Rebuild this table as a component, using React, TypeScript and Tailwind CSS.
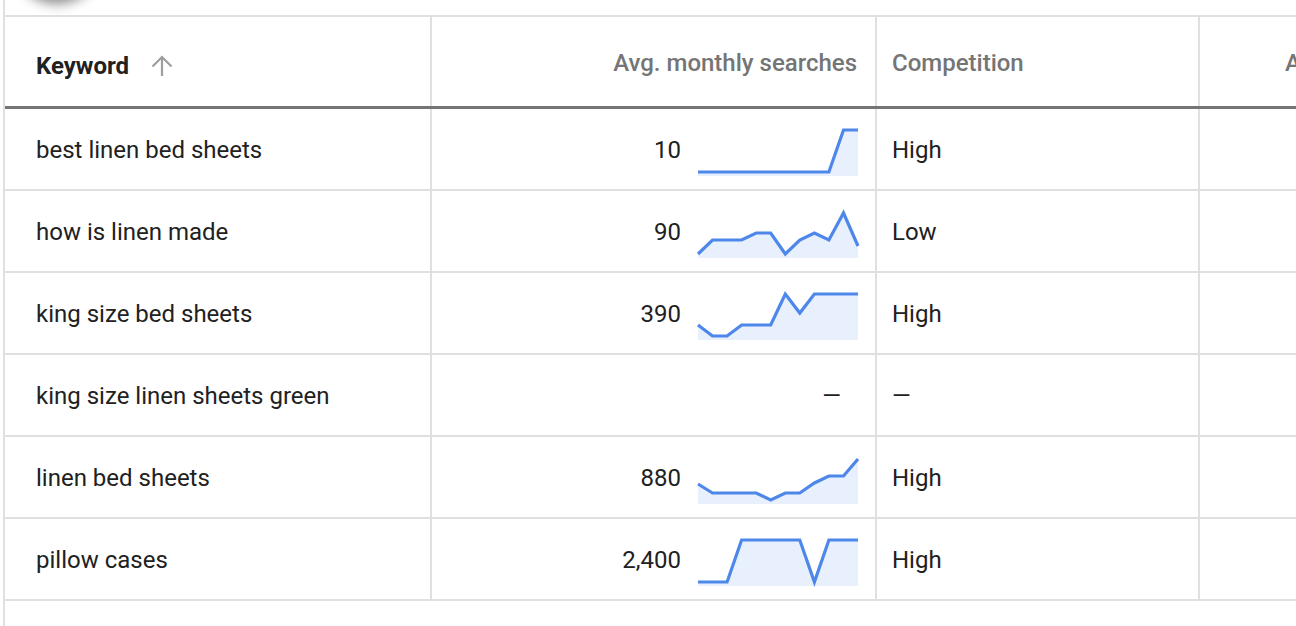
import React from "react";

interface Row {
  keyword: string;
  searches: string;
  trend: number[] | null;
  competition: string;
}

// y positions inside a 160x48 sparkline (2 = top, 44 = bottom)
const rows: Row[] = [
  {
    keyword: "best linen bed sheets",
    searches: "10",
    trend: [44, 44, 44, 44, 44, 44, 44, 44, 44, 44, 2, 2],
    competition: "High",
  },
  {
    keyword: "how is linen made",
    searches: "90",
    trend: [44, 30, 30, 30, 23, 23, 44, 30, 23, 30, 3, 36],
    competition: "Low",
  },
  {
    keyword: "king size bed sheets",
    searches: "390",
    trend: [33, 44, 44, 33, 33, 33, 2, 21, 2, 2, 2, 2],
    competition: "High",
  },
  {
    keyword: "king size linen sheets green",
    searches: "",
    trend: null,
    competition: "—",
  },
  {
    keyword: "linen bed sheets",
    searches: "880",
    trend: [28, 37, 37, 37, 37, 44, 37, 37, 27, 20, 20, 3],
    competition: "High",
  },
  {
    keyword: "pillow cases",
    searches: "2,400",
    trend: [44, 44, 44, 2, 2, 2, 2, 2, 44, 2, 2, 2],
    competition: "High",
  },
];

const Sparkline: React.FC<{ points: number[] }> = ({ points }) => {
  const step = 160 / (points.length - 1);
  const line = points.map((y, i) => `${(i * step).toFixed(1)},${y}`).join(" ");
  const area = `0,48 ${line} 160,48`;
  return (
    <svg width="160" height="48" viewBox="0 0 160 48" className="block overflow-visible">
      <polygon points={area} fill="#e8f0fe" />
      <polyline points={line} fill="none" stroke="#4e87ea" strokeWidth="3.2" />
    </svg>
  );
};

const ArrowUp = () => (
  <svg width="22" height="22" viewBox="0 0 22 22" className="block">
    <path d="M11 21V2.5M1.5 11.5L11 2l9.5 9.5" fill="none" stroke="#9e9e9e" strokeWidth="2.2" />
  </svg>
);

const grid = "grid grid-cols-[427px_445px_323px_1fr]";

export default function App() {
  return (
    <div
      className="relative h-[626px] w-[1296px] overflow-hidden bg-white text-[#212121]"
      style={{ fontFamily: "Roboto, 'Noto Sans', sans-serif" }}
    >
      <div className="absolute left-[12px] top-[-90px] h-[90px] w-[90px] rounded-full bg-white shadow-[0_4px_12px_rgba(0,0,0,0.45)]" />
      <div className="ml-[3px] h-full border-l-2 border-[#e0e0e0] pt-[15px]">
        <div className="border-t-2 border-[#e0e0e0]">
          {/* header */}
          <div className={`${grid} h-[92px] border-b-[3px] border-[#757575]`}>
            <div className="flex items-center gap-[22px] border-r-2 border-[#e0e0e0] pl-[31px] pt-[8px]">
              <span className="text-[24px] font-bold">Keyword</span>
              <ArrowUp />
            </div>
            <div className="flex items-center justify-end border-r-2 border-[#e0e0e0] pr-[18px] pt-[3px]">
              <span className="text-[24px] font-medium text-[#757575]">Avg. monthly searches</span>
            </div>
            <div className="flex items-center border-r-2 border-[#e0e0e0] pl-[15px] pt-[3px]">
              <span className="text-[24px] font-medium text-[#757575]">Competition</span>
            </div>
            <div className="flex items-center overflow-hidden whitespace-nowrap pl-[85px] pt-[3px]">
              <span className="text-[24px] font-medium text-[#757575]">Ad impr.</span>
            </div>
          </div>
          {/* body */}
          {rows.map((row) => (
            <div key={row.keyword} className={`${grid} h-[82px] border-b-2 border-[#e0e0e0]`}>
              <div className="flex items-center border-r-2 border-[#e0e0e0] pl-[31px] pt-[2px] text-[24px]">
                {row.keyword}
              </div>
              <div className="flex items-center justify-end border-r-2 border-[#e0e0e0] pr-[17px] text-[24px]">
                {row.trend ? (
                  <>
                    <span className="pt-[2px]">{row.searches}</span>
                    <div className="ml-[17px] mt-[6px]">
                      <Sparkline points={row.trend} />
                    </div>
                  </>
                ) : (
                  <span className="pr-[17px] pt-[2px]">—</span>
                )}
              </div>
              <div className="flex items-center border-r-2 border-[#e0e0e0] pl-[15px] pt-[2px] text-[24px]">
                {row.competition}
              </div>
              <div />
            </div>
          ))}
        </div>
      </div>
    </div>
  );
}
